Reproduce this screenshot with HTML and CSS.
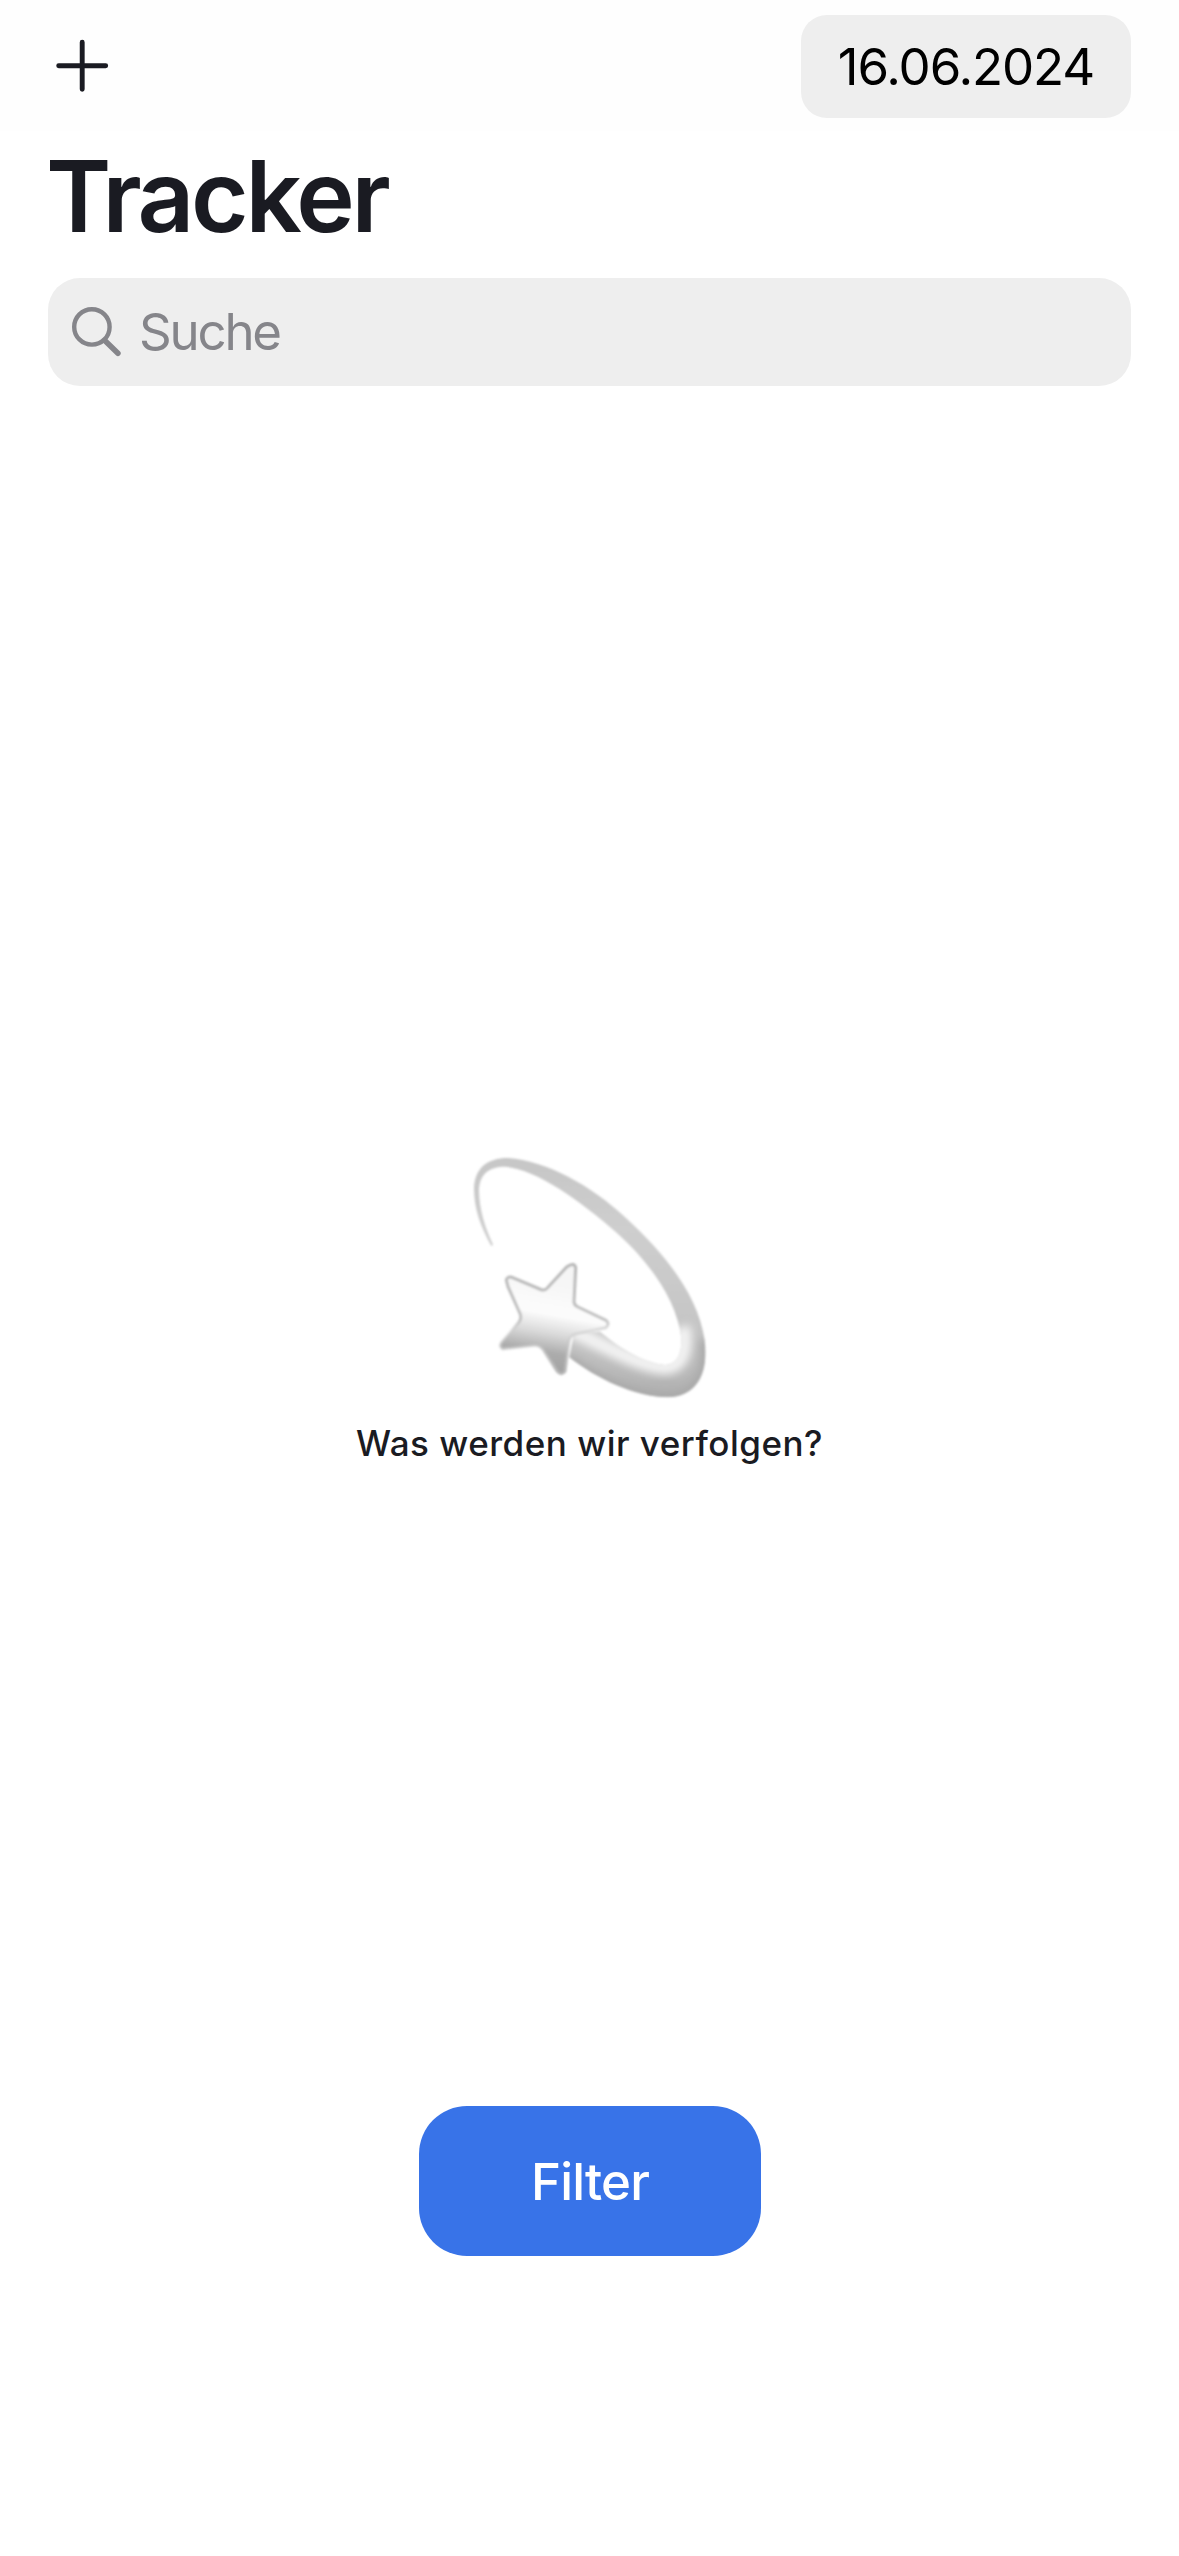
FILE: index.html
```html
<!DOCTYPE html>
<html lang="de">
<head>
<meta charset="utf-8">
<title>Tracker</title>
<link rel="stylesheet" href="styles.css">
</head>
<body>
<div class="screen">
  <header class="navbar">
    <button class="add" aria-label="Hinzufügen">
      <svg width="54" height="54" viewBox="0 0 54 54"><path d="M27.2 3.2V50.2M3.7 26.7H50.7" fill="none" stroke="#1a1b22" stroke-width="4.9" stroke-linecap="round"/></svg>
    </button>
    <div class="date"><span class="date-text">16.06.2024</span></div>
  </header>
  <h1 class="title"><span>Tracker</span></h1>
  <div class="search">
    <svg class="search-icon" width="50" height="50" viewBox="0 0 50 50" fill="none" stroke="#85858a"><circle cx="20.9" cy="19.9" r="17.7" stroke-width="4.4"/><path d="M33.8 33.6L46.9 46.2" stroke-width="5.6" stroke-linecap="round"/></svg>
    <span class="search-text">Suche</span>
  </div>
  <main class="empty">
    <svg class="star" width="280" height="276" viewBox="0 0 840 828">
      <defs>
        <linearGradient id="trail" gradientUnits="userSpaceOnUse" x1="0" y1="50" x2="0" y2="770">
          <stop offset="0" stop-color="#c6c6c6"/><stop offset=".3" stop-color="#cecece"/><stop offset=".6" stop-color="#c8c8c8"/><stop offset=".8" stop-color="#c2c2c2"/><stop offset="1" stop-color="#b0b0b0"/>
        </linearGradient>
        <linearGradient id="body" gradientUnits="userSpaceOnUse" x1="320" y1="410" x2="270" y2="690">
          <stop offset="0" stop-color="#f5f5f5"/><stop offset=".4" stop-color="#fcfcfc"/><stop offset=".6" stop-color="#dadada"/><stop offset=".8" stop-color="#acacac"/><stop offset="1" stop-color="#a2a2a2"/>
        </linearGradient>
        <linearGradient id="edge" gradientUnits="userSpaceOnUse" x1="0" y1="370" x2="0" y2="710">
          <stop offset="0" stop-color="#b6b6b6"/><stop offset=".5" stop-color="#c2c2c2"/><stop offset=".6" stop-color="#c8c8c8" stop-opacity=".5"/><stop offset="1" stop-color="#b4b4b4"/>
        </linearGradient>
        <filter id="soft" x="-5%" y="-5%" width="110%" height="110%"><feGaussianBlur stdDeviation="3"/></filter>
        <filter id="glow" x="-30%" y="-30%" width="160%" height="160%"><feGaussianBlur stdDeviation="13"/></filter>
        <clipPath id="tail"><path d="M124 318C93 262 72 206 72 146C74 84 112 54 174 54C288 62 424 136 528 234C644 340 744 464 764 600C776 706 738 768 654 772C552 770 440 716 358 652L372 580L450 575C510 625 580 668 646 675C682 672 696 640 694 594C680 480 600 368 500 278C390 182 264 90 166 80C116 80 88 102 87 154C88 206 104 262 129 314Z"/></clipPath>
      </defs>
      <g filter="url(#soft)">
        <g clip-path="url(#tail)">
          <rect width="840" height="828" fill="url(#trail)"/>
          <path d="M360 570C450 608 550 672 640 682C692 682 712 640 700 560" fill="none" stroke="#f4f4f4" stroke-width="44" filter="url(#glow)"/>
          <path d="M350 655C440 725 560 775 655 775C738 770 780 706 764 600" fill="none" stroke="#a9a9a9" stroke-width="34" filter="url(#glow)"/>
        </g>
        <path d="M169 420Q171 409 186 412L276 450Q286 452 294 442L350 381Q373 365 377 383L372 486Q373 496 384 501L468 541Q480 552 468 563L378 582Q358 588 357 606L345 694Q334 708 322 694L280 630Q270 615 252 616L158 626Q146 619 156 606L207 547Q217 532 208 516L174 440Z" fill="url(#body)" stroke="url(#edge)" stroke-width="9" stroke-linejoin="round"/>
      </g>
    </svg>
    <p class="caption"><span>Was werden wir verfolgen?</span></p>
  </main>
  <button class="filter"><span>Filter</span></button>
</div>
</body>
</html>
```
FILE: styles.css
```css
* { box-sizing: border-box; }
body { margin: 0; background: #fff; font-family: Inter, "Liberation Sans", sans-serif; color: #1a1b22; }
button { margin: 0; padding: 0; border: 0; background: none; font: inherit; }
.screen { width: 1179px; height: 2556px; display: flex; flex-direction: column; }
.navbar { height: 131px; padding: 15px 48px 13px 55px; display: flex; justify-content: space-between; background: #fefefe; }
.add { width: 54px; height: 54px; margin-top: 24px; }
.add svg { display: block; }
.date { width: 330px; height: 103px; border-radius: 26px; background: #eee; color: #000; font-size: 51px; line-height: 103px; text-align: center; white-space: nowrap; letter-spacing: -1.1px; }
.title { margin: 5px 0 0 46px; font-size: 99px; line-height: 120px; font-weight: 600; letter-spacing: -3.3px; }
.search { height: 108px; margin: 22px 48px 0; padding-left: 23px; display: flex; align-items: center; border-radius: 32px; background: #eee; }
.search-icon { margin-right: 18px; }
.search-text { font-size: 51px; line-height: 110px; color: #85858a; letter-spacing: -2.2px; }
.empty { margin-top: 754px; display: flex; flex-direction: column; align-items: center; }
.star { display: block; }
.caption { margin: 0; font-size: 35px; line-height: 54px; font-weight: 500; letter-spacing: .5px; }
.filter { width: 342px; height: 150px; margin: 636px 0 0 419px; border-radius: 48px; background: #3873e8; color: #fff; font-size: 51px; font-weight: 500; line-height: 152px; letter-spacing: -.8px; }
```
